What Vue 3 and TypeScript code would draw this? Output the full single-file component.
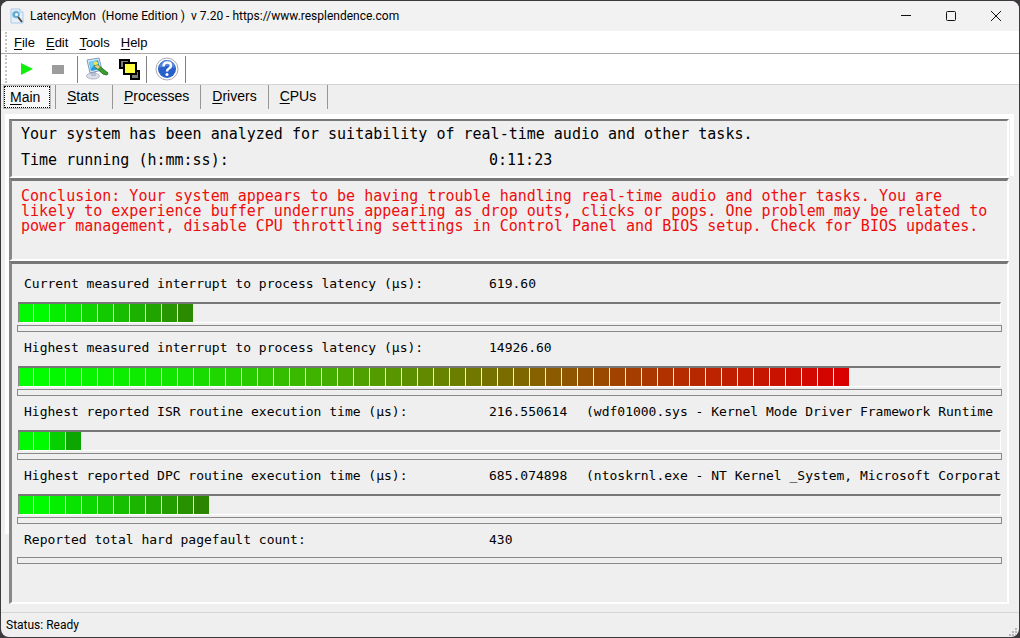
<script setup lang="ts">
interface Meter { label: string; value: string; detail: string; filled: number; scale: number }
const tabs: string[] = ['Main', 'Stats', 'Processes', 'Drivers', 'CPUs']
const menus: string[] = ['File', 'Edit', 'Tools', 'Help']
const meters: Meter[] = [
  { label: 'Current measured interrupt to process latency (µs):', value: '619.60', detail: '', filled: 11, scale: 17 },
  { label: 'Highest measured interrupt to process latency (µs):', value: '14926.60', detail: '', filled: 52, scale: 52 },
  { label: 'Highest reported ISR routine execution time (µs):', value: '216.550614', detail: '(wdf01000.sys - Kernel Mode Driver Framework Runtime', filled: 4, scale: 5 },
  { label: 'Highest reported DPC routine execution time (µs):', value: '685.074898', detail: '(ntoskrnl.exe - NT Kernel _System, Microsoft Corporat', filled: 12, scale: 18 },
]
const stops: number[][] = [[0, 255, 0], [20, 225, 0], [75, 165, 0], [125, 105, 0], [180, 45, 0], [216, 0, 0]]
function longColour(t: number): string {
  const p = Math.min(t, 1) * (stops.length - 1)
  const i = Math.min(Math.floor(p), stops.length - 2)
  const c = stops[i].map((v, k) => Math.round(v + (stops[i + 1][k] - v) * (p - i)))
  return `rgb(${c.join(',')})`
}
function barColour(m: Meter, n: number): string {
  if (m.filled > 20) return longColour((n - 1) / (m.filled - 1))
  const t = Math.max(0, (n - 2) / m.scale)
  return `rgb(${Math.round(80 * t * (m.filled > 5 ? 1 : 0.4))},${Math.round(250 - 210 * t)},0)`
}
</script>

<template>
  <div class="desk">
    <main class="window">
      <header class="title">
        <svg class="app-icon" width="16" height="16" viewBox="0 0 16 16">
          <path d="M2 1h9l3 3v11H2z" fill="#e4f1fb" stroke="#a9c9e6" />
          <path d="M11 1v3h3" fill="#fff" stroke="#a9c9e6" />
          <circle cx="7" cy="6.500" r="3.500" fill="#5aa9cf" stroke="#8fc0dc" />
          <circle cx="7.500" cy="6.500" r="1.500" fill="#f4fcff" />
          <path d="M9 9l4 5" stroke="#54483c" stroke-width="2" />
        </svg>
        <h1>LatencyMon&nbsp; (Home Edition )&nbsp; v 7.20 - https://www.resplendence.com</h1>
        <div class="controls">
          <button aria-label="Minimize"><svg width="12" height="12"><path d="M1 5.500h10" /></svg></button>
          <button aria-label="Maximize"><svg width="12" height="12"><rect x="1.500" y="1.500" width="9" height="9" rx="1" /></svg></button>
          <button aria-label="Close"><svg width="12" height="12"><path d="M1 1l10 10M11 1L1 11" /></svg></button>
        </div>
      </header>
      <nav class="menu grip">
        <button v-for="m in menus" :key="m"><u>{{ m[0] }}</u>{{ m.slice(1) }}</button>
      </nav>
      <div class="tools grip">
        <button class="small" aria-label="Start"><svg width="14" height="14"><path d="M1 1l12 6-12 6z" fill="#0cf00c" /></svg></button>
        <button class="small stop" aria-label="Stop"><svg width="14" height="14"><path d="M1 3h12v9H1z" fill="#9c9c9c" /></svg></button>
        <i class="sep"></i>
        <button aria-label="Options"><svg width="24" height="24" viewBox="0 0 24 24">
          <ellipse cx="8" cy="19" rx="6.500" ry="3" fill="#dcdfe9" stroke="#b4b8c8" />
          <path d="M6 14h5v5H6z" fill="#b8bed2" />
          <path d="M2 3l12-2 3 12-12 3z" fill="#dbeaf7" stroke="#7d9ab8" />
          <path d="M4 5l9-2 2 9-9 2z" fill="#2198df" />
          <path d="M4 5l9-2-7 9z" fill="#70cff6" />
          <circle cx="11" cy="6.500" r="2" fill="#ffe23b" />
          <path d="M9 9l4-1 10 8-1 2-4-1z" fill="#3c9b32" stroke="#2c7a28" />
          <path d="M9 9l4-1 2 2-2 2z" fill="#e8c889" />
        </svg></button>
        <button aria-label="Windows"><svg width="24" height="24" viewBox="0 0 24 24">
          <path d="M2 3h9v8H2zM13 14h8v8h-8z" fill="#7b7b7b" stroke="#000" stroke-width="2" />
          <path d="M6 6h12v11H6z" fill="#ffff40" stroke="#000" stroke-width="2" />
        </svg></button>
        <i class="sep"></i>
        <button class="help" aria-label="Help"><svg width="24" height="24" viewBox="0 0 24 24">
          <circle cx="12" cy="12" r="11" fill="#fff" stroke="#a7a9b3" />
          <circle cx="12" cy="12" r="9" fill="#285fca" />
          <path d="M4 11a8 8 0 0 1 16 0q-8-4-16 0" fill="#5185dc" />
          <path d="M8.500 9.500q0-4 4-4 3.500 0 3.500 3 0 2-2 3-2 1-2 3" fill="none" stroke="#fff" stroke-width="2.500" />
          <circle cx="12" cy="17.500" r="1.500" fill="#fff" />
        </svg></button>
        <i class="sep last"></i>
      </div>
      <nav class="tabs">
        <button v-for="(t, i) in tabs" :key="t" :class="{ active: i === 0 }"><u>{{ t[0] }}</u>{{ t.slice(1) }}</button>
      </nav>
      <div class="page">
        <section class="panel summary">
          <p>Your system has been analyzed for suitability of real-time audio and other tasks.</p>
          <p class="pair"><span>Time running (h:mm:ss):</span><span>0:11:23</span></p>
        </section>
        <section class="panel conclusion">
          <p>Conclusion: Your system appears to be having trouble handling real-time audio and other tasks. You are likely to experience buffer underruns appearing as drop outs, clicks or pops. One problem may be related to power management, disable CPU throttling settings in Control Panel and BIOS setup. Check for BIOS updates.</p>
        </section>
        <section class="panel meters">
          <div v-for="m in meters" :key="m.label" class="meter">
            <p class="pair"><span>{{ m.label }}</span><span>{{ m.value }}</span><span class="detail">{{ m.detail }}</span></p>
            <div class="bar"><i v-for="n in m.filled" :key="n" :style="{ background: barColour(m, n) }"></i></div>
            <div class="rule"></div>
          </div>
          <div class="meter">
            <p class="pair"><span>Reported total hard pagefault count:</span><span>430</span></p>
            <div class="rule"></div>
          </div>
        </section>
      </div>
      <footer class="status">
        <span>Status: Ready</span>
        <svg width="10" height="10" fill="#b8b8b8"><path d="M7 1h2v2H7zM4 4h2v2H4zM7 4h2v2H7zM1 7h2v2H1zM4 7h2v2H4zM7 7h2v2H7z" /></svg>
      </footer>
    </main>
  </div>
</template>

<style>
body { margin: 0; }
</style>

<style scoped>
* { box-sizing: border-box; }
p, h1 { margin: 0; font-weight: 400; }
button { border: 0; padding: 0; background: none; color: inherit; font: inherit; }
u { text-underline-offset: 2px; }
.desk { min-height: 100vh; padding: 1px; background: #3c3a3d; display: flex; }
.window { flex: 1; min-width: 0; display: flex; flex-direction: column; background: #efefef; border-radius: 8px; overflow: hidden; color: #000; font-family: "Liberation Sans", Arial, sans-serif; }
.title { height: 30px; display: flex; align-items: center; background: #f2f2f2; padding-left: 8px; }
.title h1 { font: 12px/16px Roboto, "Noto Sans", sans-serif; margin-left: 5px; flex: 1; white-space: nowrap; }
.controls { display: flex; padding-right: 1px; }
.controls button { width: 45px; height: 29px; display: flex; align-items: center; justify-content: center; }
.controls svg { fill: none; stroke: #111; }
.grip { position: relative; background: #fff; }
.grip::before { content: ""; position: absolute; left: 4px; top: 1px; bottom: 1px; border-left: 2px dotted #c4c4c4; }
.menu { height: 23px; border-bottom: 1px solid #a8a8a8; display: flex; gap: 11px; padding-left: 13px; font-size: 13px; align-items: center; }
.tools { height: 31px; border-bottom: 1px solid #d4d4d4; display: flex; align-items: center; padding-left: 18px; }
.tools button { display: flex; width: 33px; justify-content: center; }
.tools button.small { width: 16px; margin-right: 15px; }
.tools button.stop { margin-right: 11px; }
.tools button.help { width: 36px; }
.sep { width: 1px; height: 27px; background: #808080; margin-right: 2px; }
.sep.last { margin-right: 0; }
.tabs { display: flex; height: 29px; padding-left: 3px; font-size: 14px; }
.tabs button { height: 24px; padding: 0 11px 2px; border-right: 1px solid #969696; }
.tabs button.active { margin: 1px 5px 0 0; height: 22px; width: 46px; padding: 0 0 0 5px; text-align: left; border: 1px dotted #000; outline: 1px solid #bbb; background: #f8f8f8; }
.tabs button.active + button { border-left: 1px solid #969696; padding-right: 13px; }
.page { flex: 1; padding: 5px 5px 8px 4px; margin: 0 5px 0 4px; background: linear-gradient(#fff, #fff) left top / 4px 420px no-repeat, linear-gradient(#fff, #fff) right top / 4px 62px no-repeat, linear-gradient(#fff, #fff) left top / 100% 5px no-repeat; display: flex; flex-direction: column; }
.panel { border: solid; border-width: 3px 2px 2px 3px; border-color: #777 #fff #fff #888; background: #efefef; font-family: "DejaVu Sans Mono", monospace; font-size: 15px; }
.summary { height: 59px; padding: 0 9px; line-height: 26px; white-space: nowrap; border-top-width: 2px; }
.conclusion { height: 83px; padding: 8px 9px 0; color: #ee0c0c; line-height: 15px; }
.pair { display: grid; grid-template-columns: 468px 97px minmax(0, 1fr); white-space: nowrap; }
.meters { flex: 1; padding: 4px 5px; font-size: 13px; }
.meter .pair { height: 34px; line-height: 32px; padding-left: 7px; grid-template-columns: 465px 97px minmax(0, 1fr); }
.bar { display: flex; height: 21px; gap: 1px; margin: 0 1px; border: 1px solid #fff; border-top: 2px solid #777; border-left: 1px solid #888; }
.bar i { width: 15px; }
.bar i:first-child { width: 14px; }
.rule { height: 7px; margin-top: 2px; border: 1px solid #888; }
.meter:last-child .rule { margin-top: -1px; }
.status { height: 25px; border-top: 1px solid #d5d5d5; display: flex; justify-content: space-between; align-items: center; padding: 0 1px 0 5px; font: 12px/16px Roboto, "Noto Sans", sans-serif; }
.status svg { align-self: flex-end; }
</style>
